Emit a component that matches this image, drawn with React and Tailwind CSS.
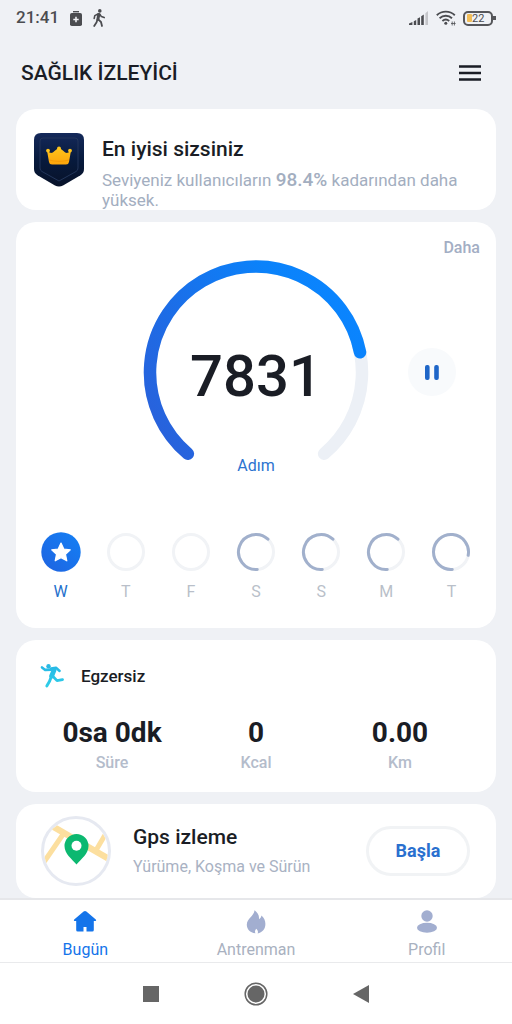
import React from "react";

const polar = (cx, cy, r, deg) => {
  const a = (deg * Math.PI) / 180;
  return [cx + r * Math.cos(a), cy + r * Math.sin(a)];
};

// Clockwise arc between two angles, measured from the positive x axis.
const arc = (cx, cy, r, from, to) => {
  const [x1, y1] = polar(cx, cy, r, from);
  const [x2, y2] = polar(cx, cy, r, to);
  return `M${x1} ${y1}A${r} ${r} 0 ${to - from > 180 ? 1 : 0} 1 ${x2} ${y2}`;
};

const days = [
  { label: "W", done: true },
  { label: "T" },
  { label: "F" },
  { label: "S", end: 313 },
  { label: "S", end: 313 },
  { label: "M", end: 313 },
  { label: "T", end: 371 },
];

const stats = [
  { value: "0sa 0dk", label: "Süre" },
  { value: "0", label: "Kcal" },
  { value: "0.00", label: "Km" },
];

function StatusBar() {
  return (
    <div className="flex h-9 items-center justify-between px-4 text-[#4b4c50]">
      <div className="flex items-center gap-[11px]">
        <span className="text-[17px] font-medium">21:41</span>
        <svg width="12" height="15" viewBox="0 0 12 15" aria-hidden="true">
          <path d="M3 0h6v1.400H3z" fill="currentColor" />
          <rect y="2" width="12" height="13" rx="1.800" fill="currentColor" />
          <path d="M6 5.800v5.400M3.300 8.500h5.400" stroke="#f3f4f7" strokeWidth="1.500" />
        </svg>
        <svg width="12" height="18" viewBox="0 0 12 18" fill="none" stroke="currentColor" strokeLinecap="round" strokeLinejoin="round" aria-hidden="true">
          <circle cx="6.800" cy="1.900" r="1.800" fill="currentColor" stroke="none" />
          <path d="M5.800 5.400 4.900 10.200" strokeWidth="3" />
          <path d="M5.400 4.800 1.800 6.600 1.200 9.400M6.800 5.200l1.600 2.400 2.800 1" strokeWidth="1.600" />
          <path d="M4.400 10.600 3.600 13.200 1.200 17M5.200 10.400l2.800 2.600 1 4" strokeWidth="1.800" />
        </svg>
      </div>
      <div className="flex items-center gap-[7px]">
        <svg width="20" height="14" viewBox="0 0 20 14" aria-hidden="true">
          <path d="M0 14v-1.500L3.400 11v3zM4.800 14v-3.800l2.400-1.200v5zM8.500 14V7.600l2.500-1.400V14zM12.200 14V5.200l2.600-1.600V14z" fill="currentColor" />
          <path d="M16.400 14V2.200L19 0v14z" fill="#c4c5c9" />
        </svg>
        <svg width="20" height="16" viewBox="0 0 20 16" fill="none" stroke="currentColor" aria-hidden="true">
          <path d="M.8 5.200a13.200 13.200 0 0 1 18 0M3.600 8.200a9.200 9.200 0 0 1 12.400 0M6.400 11a5.200 5.200 0 0 1 6.800 0" strokeWidth="1.900" />
          <circle cx="9.800" cy="13.200" r="1.500" fill="currentColor" stroke="none" />
          <path d="M16.200 11.500v4M18.400 11.500v4M15 13.500h4.600" strokeWidth=".8" />
        </svg>
        <div className="flex items-center">
          <div className="flex h-[15px] w-[30px] items-center rounded-[5px] border-2 border-[#55565a] pl-[2px]">
            <span className="h-2 w-[5px] rounded-[1px] bg-[#f1bd58]" />
            <span className="text-[11px] leading-none">22</span>
          </div>
          <span className="h-1 w-[3px] bg-[#55565a]" />
        </div>
      </div>
    </div>
  );
}

function Badge() {
  return (
    <svg className="shrink-0" width="50" height="55" viewBox="0 0 50 55" aria-hidden="true">
      <defs>
        <linearGradient id="badge" x1="0" y1="0" x2="0" y2="1">
          <stop offset="0" stopColor="#14295a" />
          <stop offset=".5" stopColor="#071a3d" />
          <stop offset="1" stopColor="#081229" />
        </linearGradient>
        <linearGradient id="crown" x1="0" y1="0" x2="0" y2="1">
          <stop offset="0" stopColor="#ffc41c" />
          <stop offset="1" stopColor="#fda50b" />
        </linearGradient>
      </defs>
      <path d="M7 0h36q7 0 7 7v29q0 4-3.500 6.200L29 52.500q-4 2-8 0L3.500 42.200Q0 40 0 36V7Q0 0 7 0z" fill="url(#badge)" />
      <path d="M9 5h32q3 0 3 3v27q0 2.500-2 3.500L25 48 8 38.500q-2-1-2-3.500V8q0-3 3-3z" fill="none" stroke="#22355a" />
      <path d="M13 17.500q4 4.500 7.500.5l4.500-3.500 4.500 3.500q3.500 4 7.500-.5L35 29q-.4 2.500-3 2.500H18q-2.600 0-3-2.500z" fill="url(#crown)" />
      <g fill="#ffc41c">
        <circle cx="14" cy="17.600" r="1.900" />
        <circle cx="25" cy="15.600" r="2" />
        <circle cx="36" cy="17.600" r="1.900" />
      </g>
      <path d="M15 27q10 2.800 20 0" fill="none" stroke="#f79b08" strokeWidth="1.200" />
    </svg>
  );
}

function StepsRing() {
  return (
    <svg className="[grid-area:1/1]" width="226" height="220" viewBox="0 0 226 220" fill="none" strokeWidth="12.500" strokeLinecap="round" aria-hidden="true">
      <defs>
        <linearGradient id="steps" x1="0" y1=".8" x2="1" y2=".2">
          <stop offset="0" stopColor="#2862dc" />
          <stop offset=".3" stopColor="#1d6ce6" />
          <stop offset=".75" stopColor="#0b82fa" />
          <stop offset="1" stopColor="#0a85ff" />
        </linearGradient>
      </defs>
      <path d={arc(113, 114.5, 106, 130, 410)} stroke="#ecf0f6" />
      <path d={arc(113, 114.5, 106, 130, 349)} stroke="url(#steps)" />
    </svg>
  );
}

function DayRing({ day }) {
  return (
    <svg width="40" height="40" viewBox="0 0 40 40" fill="none" aria-hidden="true">
      {day.done ? (
        <>
          <defs>
            <linearGradient id="day" x1="0" y1="1" x2="1" y2="0">
              <stop offset="0" stopColor="#1f63e0" />
              <stop offset="1" stopColor="#1380f5" />
            </linearGradient>
          </defs>
          <circle cx="20" cy="20" r="19.700" fill="url(#day)" />
          <path d="M20 11l2.800 6 6.500.8-4.800 4.500 1.300 6.500-5.800-3.200-5.800 3.200 1.300-6.500-4.800-4.500 6.500-.8z" fill="#fff" stroke="#fff" strokeWidth="1.200" strokeLinejoin="round" />
        </>
      ) : (
        <circle cx="20" cy="20" r="17.500" stroke="#f1f3f6" strokeWidth="3" />
      )}
      {day.end && (
        <path d={arc(20, 20, 17.5, 86, day.end)} stroke="#a1b0cc" strokeWidth="3" strokeLinecap="round" />
      )}
    </svg>
  );
}

function Runner() {
  return (
    <svg width="24" height="24" viewBox="0 0 24 24" fill="none" stroke="url(#run)" strokeLinecap="round" strokeLinejoin="round" aria-hidden="true">
      <defs>
        <linearGradient id="run" gradientUnits="userSpaceOnUse" x1="0" y1="0" x2="0" y2="24">
          <stop offset="0" stopColor="#26b6e6" />
          <stop offset="1" stopColor="#2fcfe8" />
        </linearGradient>
      </defs>
      <circle cx="8.500" cy="2.200" r="2.200" fill="#2bb9e4" stroke="none" />
      <path d="M2 3.400 5.200 5.900 11.500 5.600" strokeWidth="2.600" />
      <path d="M11 4.600 16 3.800 19.600 7" strokeWidth="2.500" />
      <path d="M14 6.400 11.600 12" strokeWidth="4.800" />
      <path d="M12.800 12.200 17 16.600 22.500 15.600" strokeWidth="2.800" />
      <path d="M11.200 13 9.400 17.600 6.800 22" strokeWidth="2.900" />
    </svg>
  );
}

function MapIcon() {
  return (
    <svg className="shrink-0" width="70" height="70" viewBox="0 0 70 70" fill="none" aria-hidden="true">
      <defs>
        <clipPath id="map">
          <circle cx="35" cy="35" r="32" />
        </clipPath>
      </defs>
      <circle cx="35" cy="35" r="33.500" fill="#fff" stroke="#e6e9f1" strokeWidth="3" />
      <g clipPath="url(#map)" stroke="#fcdf9f">
        <path d="M11 10 68 43" strokeWidth="6.500" />
        <path d="M23 17 3 46" strokeWidth="5" />
        <path d="M54 36 64 19" strokeWidth="5" />
      </g>
      <path d="M35.500 48.500C31 43 23.500 38 23.500 30a12 12 0 0 1 24 0c0 8-7.500 13-12 18.500z" fill="#0cb870" />
      <circle cx="35.500" cy="29.800" r="5" fill="#fff" />
    </svg>
  );
}

const tabs = [
  {
    label: "Bugün",
    active: true,
    icon: (
      <path d="M10.600 1.600 1.200 9.400q-.9 1 .2 1.500l1.800.2V20q0 1.500 1.500 1.500h5.800V17h3v4.500h5.800q1.500 0 1.500-1.500v-8.900l1.800-.2q1.100-.5.200-1.500L13.400 1.600q-1.400-1.100-2.800 0z" />
    ),
  },
  {
    label: "Antrenman",
    icon: (
      <path d="M10.600.3C13.600 2.500 15.400 5.600 15 9.200c1.300-.6 2.200-1.800 2.400-3.600 2.600 2.200 4 5 4 8.400 0 4.900-3 8.500-7.800 9.400.6-1.200.4-2.400-.3-3.400-.5-.6-.7-.8-.9-1.300-.7.800-1.400 1.600-1.400 2.600 0 .8.100 1.400.4 2C6 22.700 2.800 19.200 2.800 14.800c0-6.300 6.900-8.200 7.800-14.500z" />
    ),
  },
  {
    label: "Profil",
    icon: (
      <>
        <circle cx="12" cy="6" r="5.700" />
        <ellipse cx="12" cy="17.700" rx="10" ry="5" />
      </>
    ),
  },
];

export default function App() {
  return (
    <div className="flex min-h-screen flex-col bg-[#eff1f5] font-[Roboto,sans-serif] text-[#1a1d25]">
      <StatusBar />
      <header className="flex h-[73px] items-center justify-between pl-[21px] pr-[31px]">
        <h1 className="text-[21px] font-medium leading-7">SAĞLIK İZLEYİCİ</h1>
        <button type="button" aria-label="Menü">
          <svg width="22" height="18" viewBox="0 0 22 18" stroke="#1a1d25" strokeWidth="2.400" aria-hidden="true">
            <path d="M0 2.500h22M0 9h22M0 15.500h22" />
          </svg>
        </button>
      </header>

      <main className="flex grow flex-col gap-3 px-4">
        <section className="flex rounded-[20px] bg-white pl-[18px] pr-4 pt-6">
          <Badge />
          <div className="ml-[18px]">
            <h2 className="text-[21px] font-medium leading-8">En iyisi sizsiniz</h2>
            <p className="mt-[5px] text-[17px] leading-5 text-[#a3aec0]">
              Seviyeniz kullanıcıların <span className="text-[19px] font-medium leading-none">98.4%</span> kadarından daha yüksek.
            </p>
          </div>
        </section>

        <section className="flex flex-col rounded-[20px] bg-white px-3 pb-[26px] pt-4">
          <a href="#daha" className="mr-1 self-end font-medium leading-5 text-[#a3aec4]">Daha</a>
          <div className="grid grid-cols-[1fr_auto_1fr]">
            <div className="col-start-2 grid justify-items-center">
              <StepsRing />
              <strong className="self-center pt-4 text-[58px] font-medium leading-none [grid-area:1/1]">7831</strong>
              <span className="self-end leading-6 text-[#2c73d0] [grid-area:1/1]">Adım</span>
            </div>
            <button type="button" aria-label="Duraklat" className="ml-[10px] mt-2 flex size-12 items-center justify-center self-center justify-self-center rounded-full bg-[#f8fafc]">
              <svg width="14" height="15" viewBox="0 0 14 15" fill="#1f66c8" aria-hidden="true">
                <rect width="4.600" height="15" rx="2" />
                <rect x="9.200" width="4.600" height="15" rx="2" />
              </svg>
            </button>
          </div>
          <ul className="mt-[54px] grid grid-cols-7">
            {days.map((day, i) => (
              <li key={i} className="flex flex-col items-center gap-[10px]">
                <DayRing day={day} />
                <span className={day.done ? "leading-5 text-[#2470cc]" : "leading-5 text-[#b9bfc9]"}>{day.label}</span>
              </li>
            ))}
          </ul>
        </section>

        <section className="rounded-[20px] bg-white px-6 pb-[17px] pt-6">
          <div className="flex items-center gap-[17px]">
            <Runner />
            <h2 className="text-[17px] font-medium leading-6">Egzersiz</h2>
          </div>
          <dl className="mt-[27px] grid grid-cols-3 text-center">
            {stats.map((s) => (
              <div key={s.label} className="flex flex-col-reverse">
                <dt className="font-medium leading-6 text-[#b4bccb]">{s.label}</dt>
                <dd className="text-[28px] font-bold leading-9">{s.value}</dd>
              </div>
            ))}
          </dl>
        </section>

        <section className="flex items-center rounded-[20px] bg-white py-3 pl-[25px] pr-[26px]">
          <MapIcon />
          <div className="ml-[22px] grow">
            <h2 className="text-[21px] font-medium leading-7">Gps izleme</h2>
            <p className="mt-1 leading-6 text-[#a9b2c3]">Yürüme, Koşma ve Sürün</p>
          </div>
          <button type="button" className="h-[50px] w-[104px] rounded-full border-[3px] border-[#f1f3f5] text-lg font-bold text-[#2a70cf]">Başla</button>
        </section>
      </main>

      <nav className="grid h-16 grid-cols-3 border-t-2 border-[#e6e7ea] bg-white">
        {tabs.map((tab) => (
          <a
            key={tab.label}
            href={`#${tab.label}`}
            className={
              tab.active
                ? "flex flex-col items-center gap-1 pt-[10px] text-[#1474ea]"
                : "flex flex-col items-center gap-1 pt-[10px] text-[#a2aed0]"
            }
          >
            <svg width="24" height="24" viewBox="0 0 24 24" fill="currentColor" aria-hidden="true">{tab.icon}</svg>
            <span className={tab.active ? "leading-6" : "leading-6 text-[#a9b1c0]"}>{tab.label}</span>
          </a>
        ))}
      </nav>

      <div className="flex h-[62px] items-center justify-center gap-[85px] border-t border-[#e9eaec] bg-white text-[#666666]">
        <button type="button" aria-label="Son uygulamalar" className="size-4 bg-[#666666]" />
        <button type="button" aria-label="Ana ekran">
          <svg width="24" height="24" viewBox="0 0 24 24" aria-hidden="true">
            <circle cx="12" cy="12" r="10.800" fill="none" stroke="currentColor" strokeWidth="1.500" />
            <circle cx="12" cy="12" r="8.500" fill="currentColor" />
          </svg>
        </button>
        <button type="button" aria-label="Geri">
          <svg width="16" height="18" viewBox="0 0 16 18" fill="currentColor" aria-hidden="true">
            <path d="M16 0v18L0 9z" />
          </svg>
        </button>
      </div>
    </div>
  );
}
